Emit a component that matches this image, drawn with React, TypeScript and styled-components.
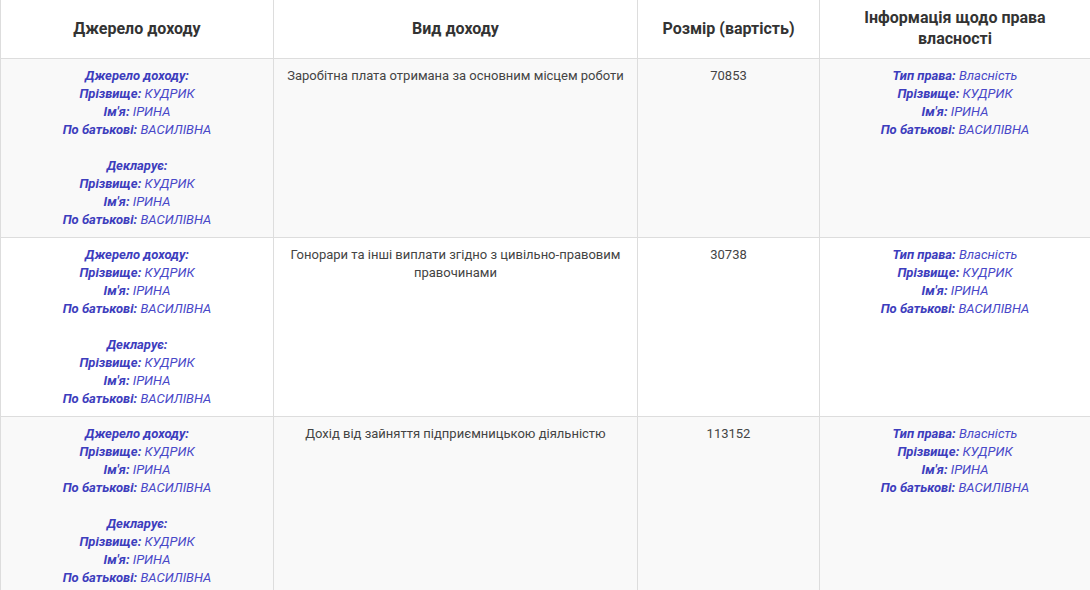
import { createGlobalStyle, styled } from "styled-components";

const GlobalStyle = createGlobalStyle`
  body {
    margin: 0;
    background: #fff;
    font-family: Roboto, "Liberation Sans", sans-serif;
  }
`;

type Person = { surname: string; name: string; patronymic: string };

type Row = { kind: string; amount: string; right: string; person: Person };

const irina: Person = { surname: "КУДРИК", name: "ІРИНА", patronymic: "ВАСИЛІВНА" };

const rows: Row[] = [
  { kind: "Заробітна плата отримана за основним місцем роботи", amount: "70853", right: "Власність", person: irina },
  { kind: "Гонорари та інші виплати згідно з цивільно-правовим правочинами", amount: "30738", right: "Власність", person: irina },
  { kind: "Дохід від зайняття підприємницькою діяльністю", amount: "113152", right: "Власність", person: irina },
];

const PersonLines = ({ p }: { p: Person }) => (
  <>
    <Line><Label>Прізвище:</Label> <Value>{p.surname}</Value></Line>
    <Line><Label>Ім'я:</Label> <Value>{p.name}</Value></Line>
    <Line><Label>По батькові:</Label> <Value>{p.patronymic}</Value></Line>
  </>
);

const App = () => {
  return (
    <>
      <GlobalStyle />
      <Table>
        <colgroup>
          <col style={{ width: 273 }} />
          <col style={{ width: 364 }} />
          <col style={{ width: 182 }} />
          <col />
        </colgroup>
        <thead>
          <tr>
            <Th>Джерело доходу</Th>
            <Th>Вид доходу</Th>
            <Th>Розмір (вартість)</Th>
            <Th>Інформація щодо права власності</Th>
          </tr>
        </thead>
        <tbody>
          {rows.map((r, i) => (
            <Tr key={i} $striped={i % 2 === 0}>
              <Td>
                <Line><Label>Джерело доходу:</Label></Line>
                <PersonLines p={r.person} />
                <Gap />
                <Line><Label>Декларує:</Label></Line>
                <PersonLines p={r.person} />
              </Td>
              <Td>{r.kind}</Td>
              <Td>{r.amount}</Td>
              <Td>
                <Line><Label>Тип права:</Label> <Value>{r.right}</Value></Line>
                <PersonLines p={r.person} />
              </Td>
            </Tr>
          ))}
        </tbody>
      </Table>
    </>
  );
};

export default App;

const Table = styled.table`
width: 1090px;
border-collapse: collapse;
table-layout: fixed;
`
const Th = styled.th`
font-size: 16px;
font-weight: 700;
line-height: 21px;
color: #333;
text-align: center;
vertical-align: middle;
padding: 7px 20px 9px;
height: 41px;
border-left: 1px solid #ddd;
border-bottom: 1px solid #ddd;
`
const Tr = styled.tr<{ $striped: boolean }>`
background: ${(p) => (p.$striped ? "#f9f9f9" : "#fff")};
`
const Td = styled.td`
font-size: 13px;
line-height: 18px;
color: #444;
text-align: center;
vertical-align: top;
padding: 8px 12px;
border-left: 1px solid #ddd;
border-bottom: 1px solid #ddd;
`
const Line = styled.div`
white-space: nowrap;
`
const Gap = styled.div`
height: 18px;
`
const Label = styled.b`
font-style: italic;
font-weight: 700;
color: #3d3dbd;
`
const Value = styled.i`
color: #4848c8;
`
